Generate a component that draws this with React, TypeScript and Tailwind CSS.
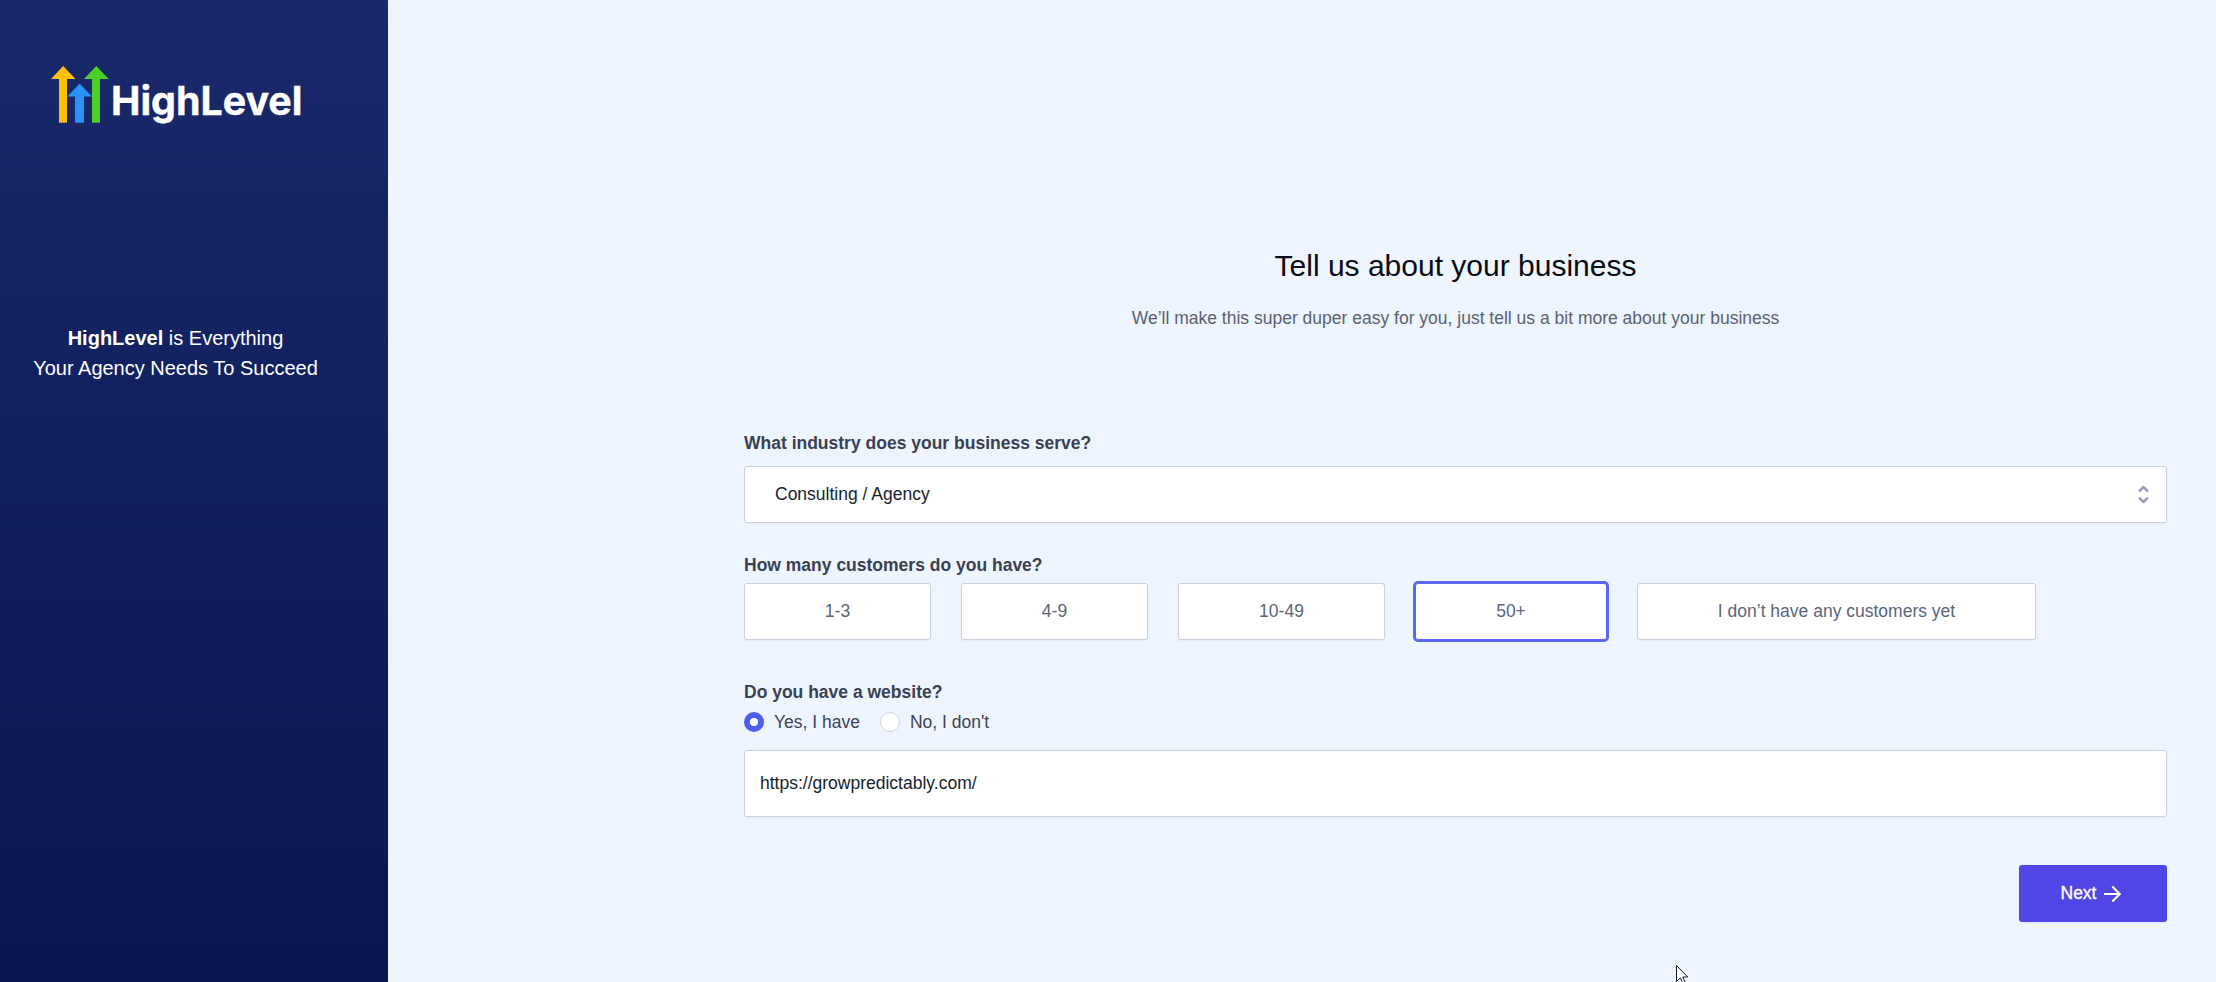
import { useState } from 'react'

const CUSTOMER_RANGES = [
  { label: '1-3', width: 'w-[187px]' },
  { label: '4-9', width: 'w-[187px]' },
  { label: '10-49', width: 'w-[207px]' },
  { label: '50+', width: 'w-[192px]' },
  { label: 'I don’t have any customers yet', width: 'w-[399px]' },
]

function Logo() {
  return (
    <svg className="w-[252px] h-[62px]" viewBox="0 0 252 62" role="img" aria-label="HighLevel">
      <path fill="#fdc006" d="M12.2 0l12.3 13H16v43.7H8V13H0z" />
      <path fill="#4bcf29" d="M45.3 0l12.4 13H49v43.7h-8V13h-8z" />
      <path fill="#2a93fa" d="M28.7 17.7L41 30.5h-8v26.2h-9V30.5h-7.7z" />
      <text
        x="60"
        y="48.8"
        fill="#fff"
        stroke="#fff"
        strokeWidth="0.4"
        fontFamily="Inter, sans-serif"
        fontWeight="700"
        fontSize="39.5"
        textLength="191.5"
        lengthAdjust="spacingAndGlyphs"
      >
        HighLevel
      </text>
    </svg>
  )
}

function Sidebar() {
  return (
    <aside className="w-[388px] shrink-0 bg-linear-to-b from-[#19296a] to-[#081650] pt-[66px] text-white">
      <div className="pl-[51px]">
        <Logo />
      </div>
      <p className="mt-[195px] w-[351px] text-center text-xl leading-[30px]">
        <strong>HighLevel</strong> is Everything
        <br />
        Your Agency Needs To Succeed
      </p>
    </aside>
  )
}

function RadioOption({ label, checked, onSelect }: { label: string; checked: boolean; onSelect: () => void }) {
  return (
    <button type="button" role="radio" aria-checked={checked} onClick={onSelect} className="flex items-center gap-2.5">
      <span
        className={`flex size-5 items-center justify-center rounded-full ${checked ? 'bg-[#4f5fee]' : 'border border-[#d2d6dc] bg-white'}`}
      >
        {checked && <span className="size-2 rounded-full bg-white" />}
      </span>
      <span className="text-[#3d4355]">{label}</span>
    </button>
  )
}

function Cursor() {
  return (
    <svg className="absolute left-[1676px] top-[965px] w-[13px] h-[17px]" viewBox="0 0 13 17">
      <path d="M.5.5v16l3.8-3.7 2.6 5.7 2.4-1-2.5-5.5h5z" fill="#fff" stroke="#1b1b2e" />
    </svg>
  )
}

export default function App() {
  const [customers, setCustomers] = useState('50+')
  const [hasWebsite, setHasWebsite] = useState(true)
  const [url, setUrl] = useState('https://growpredictably.com/')

  return (
    <div className="relative flex h-screen overflow-hidden bg-[#eef5fe] font-['Liberation_Sans',Arial,sans-serif] text-[17.5px] leading-[25px]">
      <Sidebar />
      <main className="flex-1 pl-[356px] pr-[49px] pt-[246px]">
        <header className="text-center">
          <h1 className="text-3xl leading-10 text-[#0b0b14]">Tell us about your business</h1>
          <p className="mt-5 text-[#5b6173]">
            We’ll make this super duper easy for you, just tell us a bit more about your business
          </p>
        </header>

        <section className="mt-[100px]">
          <h2 className="font-bold text-[#3a4052]">What industry does your business serve?</h2>
          <button
            type="button"
            className="mt-2.5 flex h-[57px] w-full items-center justify-between rounded-[3px] border border-[#cbd0dc] bg-white pl-[30px] pr-2.5 text-[#161e2e] shadow-xs"
          >
            Consulting / Agency
            <svg className="size-[25px]" viewBox="0 0 20 20" fill="none" stroke="#9a9fbb" strokeWidth={2}>
              <path strokeLinecap="round" strokeLinejoin="round" d="M7 7l3-3 3 3m0 6l-3 3-3-3" />
            </svg>
          </button>
        </section>

        <section className="mt-[30px]">
          <h2 className="font-bold text-[#3a4052]">How many customers do you have?</h2>
          <div className="mt-[5px] flex gap-[30px]">
            {CUSTOMER_RANGES.map(r => (
              <button
                key={r.label}
                type="button"
                onClick={() => setCustomers(r.label)}
                className={`h-[57px] rounded-[3px] border bg-white text-[#5a657a] ${r.width} ${
                  customers === r.label ? 'border-[#5b66ee] ring-2 ring-[#5b66ee]' : 'border-[#cbd0dc] shadow-xs'
                }`}
              >
                {r.label}
              </button>
            ))}
          </div>
        </section>

        <section className="mt-10">
          <h2 className="font-bold text-[#3a4052]">Do you have a website?</h2>
          <div role="radiogroup" className="mt-[5px] flex h-6 items-center gap-5">
            <RadioOption label="Yes, I have" checked={hasWebsite} onSelect={() => setHasWebsite(true)} />
            <RadioOption label="No, I don't" checked={!hasWebsite} onSelect={() => setHasWebsite(false)} />
          </div>
          <input
            type="text"
            value={url}
            onChange={e => setUrl(e.target.value)}
            className="mt-4 block h-[67px] w-full rounded-[3px] border border-[#cbd0dc] bg-white px-[15px] text-[#161e2e] shadow-xs"
          />
        </section>

        <div className="mt-12 flex justify-end">
          <button
            type="button"
            className="flex h-[57px] w-[148px] items-center justify-center gap-2 rounded-[3px] bg-[#5046e5] pr-1 text-white shadow-xs [-webkit-text-stroke:0.3px_white]"
          >
            Next
            <svg className="h-[18px] w-[17px]" viewBox="0 0 17 18" fill="none" stroke="currentColor" strokeWidth={2}>
              <path d="M0 9h15.5M8.3 1.5L15.8 9l-7.5 7.5" />
            </svg>
          </button>
        </div>
      </main>
      <Cursor />
    </div>
  )
}
